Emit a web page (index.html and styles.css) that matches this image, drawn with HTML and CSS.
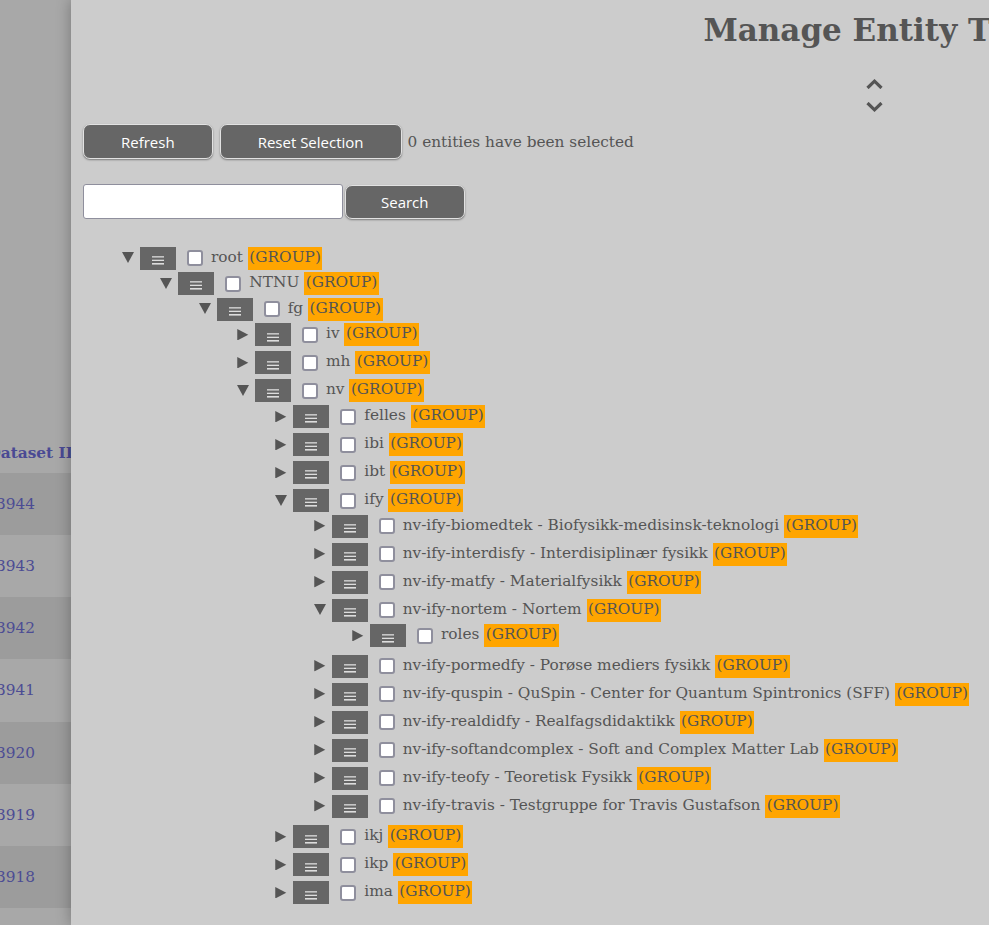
FILE: index.html
```html
<!DOCTYPE html>
<html lang="en">
<head>
<meta charset="utf-8">
<title>Manage Entity Tree</title>
<link rel="stylesheet" href="styles.css">
</head>
<body>
<svg class="defs" width="0" height="0" aria-hidden="true">
  <symbol id="tri-down" viewBox="0 0 12 11"><polygon points="0,0 12,0 6,11"/></symbol>
  <symbol id="tri-right" viewBox="0 0 12 12"><polygon points="0,0 11.5,6 0,12"/></symbol>
  <symbol id="ham" viewBox="0 0 12 9"><rect x="0" y="0.2" width="12" height="1.3"/><rect x="0" y="3.7" width="12" height="1.3"/><rect x="0" y="7" width="12" height="1.6"/></symbol>
</svg>

<div class="bgcol">
  <div class="bg-head"><span class="bg-head-text">Dataset ID</span></div>
  <div class="bg-row dark"><span class="num">3944</span></div>
  <div class="bg-row"><span class="num">3943</span></div>
  <div class="bg-row dark"><span class="num">3942</span></div>
  <div class="bg-row"><span class="num">3941</span></div>
  <div class="bg-row dark"><span class="num">3920</span></div>
  <div class="bg-row"><span class="num">3919</span></div>
  <div class="bg-row dark"><span class="num">3918</span></div>
  <div class="bg-row"><span class="num">3917</span></div>
</div>

<div class="modal">
  <h1 class="title">Manage Entity Tree</h1>
  <div class="sorter">
    <svg class="chev" viewBox="0 0 17 10" width="17" height="10"><polyline points="1.5,9 8.5,2.2 15.5,9"/></svg>
    <svg class="chev" viewBox="0 0 17 10" width="17" height="10"><polyline points="1.5,1 8.5,7.8 15.5,1"/></svg>
  </div>

  <div class="toolbar">
    <button class="btn">Refresh</button>
    <button class="btn">Reset Selection</button>
    <span class="count">0 entities have been selected</span>
  </div>

  <div class="searchrow">
    <input class="search-input" type="text">
    <button class="btn btn-search">Search</button>
  </div>

  <ul class="tree">
    <li class="open">
      <div class="row"><span class="toggle"><svg class="tri"><use href="#tri-down"/></svg></span><span class="menu"><svg class="ham"><use href="#ham"/></svg></span><span class="cb"></span><span class="label">root <span class="grp">(GROUP)</span></span></div>
      <ul class="children">
        <li class="open">
          <div class="row"><span class="toggle"><svg class="tri"><use href="#tri-down"/></svg></span><span class="menu"><svg class="ham"><use href="#ham"/></svg></span><span class="cb"></span><span class="label">NTNU <span class="grp">(GROUP)</span></span></div>
          <ul class="children">
            <li class="open">
              <div class="row"><span class="toggle"><svg class="tri"><use href="#tri-down"/></svg></span><span class="menu"><svg class="ham"><use href="#ham"/></svg></span><span class="cb"></span><span class="label">fg <span class="grp">(GROUP)</span></span></div>
              <ul class="children">
                <li class="closed">
                  <div class="row"><span class="toggle"><svg class="tri-r"><use href="#tri-right"/></svg></span><span class="menu"><svg class="ham"><use href="#ham"/></svg></span><span class="cb"></span><span class="label">iv <span class="grp">(GROUP)</span></span></div>
                </li>
                <li class="closed">
                  <div class="row"><span class="toggle"><svg class="tri-r"><use href="#tri-right"/></svg></span><span class="menu"><svg class="ham"><use href="#ham"/></svg></span><span class="cb"></span><span class="label">mh <span class="grp">(GROUP)</span></span></div>
                </li>
                <li class="open">
                  <div class="row"><span class="toggle"><svg class="tri"><use href="#tri-down"/></svg></span><span class="menu"><svg class="ham"><use href="#ham"/></svg></span><span class="cb"></span><span class="label">nv <span class="grp">(GROUP)</span></span></div>
                  <ul class="children">
                    <li class="closed">
                      <div class="row"><span class="toggle"><svg class="tri-r"><use href="#tri-right"/></svg></span><span class="menu"><svg class="ham"><use href="#ham"/></svg></span><span class="cb"></span><span class="label">felles <span class="grp">(GROUP)</span></span></div>
                    </li>
                    <li class="closed">
                      <div class="row"><span class="toggle"><svg class="tri-r"><use href="#tri-right"/></svg></span><span class="menu"><svg class="ham"><use href="#ham"/></svg></span><span class="cb"></span><span class="label">ibi <span class="grp">(GROUP)</span></span></div>
                    </li>
                    <li class="closed">
                      <div class="row"><span class="toggle"><svg class="tri-r"><use href="#tri-right"/></svg></span><span class="menu"><svg class="ham"><use href="#ham"/></svg></span><span class="cb"></span><span class="label">ibt <span class="grp">(GROUP)</span></span></div>
                    </li>
                    <li class="open">
                      <div class="row"><span class="toggle"><svg class="tri"><use href="#tri-down"/></svg></span><span class="menu"><svg class="ham"><use href="#ham"/></svg></span><span class="cb"></span><span class="label">ify <span class="grp">(GROUP)</span></span></div>
                      <ul class="children">
                        <li class="closed">
                          <div class="row"><span class="toggle"><svg class="tri-r"><use href="#tri-right"/></svg></span><span class="menu"><svg class="ham"><use href="#ham"/></svg></span><span class="cb"></span><span class="label">nv-ify-biomedtek - Biofysikk-medisinsk-teknologi <span class="grp">(GROUP)</span></span></div>
                        </li>
                        <li class="closed">
                          <div class="row"><span class="toggle"><svg class="tri-r"><use href="#tri-right"/></svg></span><span class="menu"><svg class="ham"><use href="#ham"/></svg></span><span class="cb"></span><span class="label">nv-ify-interdisfy - Interdisiplinær fysikk <span class="grp">(GROUP)</span></span></div>
                        </li>
                        <li class="closed">
                          <div class="row"><span class="toggle"><svg class="tri-r"><use href="#tri-right"/></svg></span><span class="menu"><svg class="ham"><use href="#ham"/></svg></span><span class="cb"></span><span class="label">nv-ify-matfy - Materialfysikk <span class="grp">(GROUP)</span></span></div>
                        </li>
                        <li class="open">
                          <div class="row"><span class="toggle"><svg class="tri"><use href="#tri-down"/></svg></span><span class="menu"><svg class="ham"><use href="#ham"/></svg></span><span class="cb"></span><span class="label">nv-ify-nortem - Nortem <span class="grp">(GROUP)</span></span></div>
                          <ul class="children">
                            <li class="closed">
                              <div class="row"><span class="toggle"><svg class="tri-r"><use href="#tri-right"/></svg></span><span class="menu"><svg class="ham"><use href="#ham"/></svg></span><span class="cb"></span><span class="label">roles <span class="grp">(GROUP)</span></span></div>
                            </li>
                          </ul>
                        </li>
                        <li class="closed">
                          <div class="row"><span class="toggle"><svg class="tri-r"><use href="#tri-right"/></svg></span><span class="menu"><svg class="ham"><use href="#ham"/></svg></span><span class="cb"></span><span class="label">nv-ify-pormedfy - Porøse mediers fysikk <span class="grp">(GROUP)</span></span></div>
                        </li>
                        <li class="closed">
                          <div class="row"><span class="toggle"><svg class="tri-r"><use href="#tri-right"/></svg></span><span class="menu"><svg class="ham"><use href="#ham"/></svg></span><span class="cb"></span><span class="label">nv-ify-quspin - QuSpin - Center for Quantum Spintronics (SFF) <span class="grp">(GROUP)</span></span></div>
                        </li>
                        <li class="closed">
                          <div class="row"><span class="toggle"><svg class="tri-r"><use href="#tri-right"/></svg></span><span class="menu"><svg class="ham"><use href="#ham"/></svg></span><span class="cb"></span><span class="label">nv-ify-realdidfy - Realfagsdidaktikk <span class="grp">(GROUP)</span></span></div>
                        </li>
                        <li class="closed">
                          <div class="row"><span class="toggle"><svg class="tri-r"><use href="#tri-right"/></svg></span><span class="menu"><svg class="ham"><use href="#ham"/></svg></span><span class="cb"></span><span class="label">nv-ify-softandcomplex - Soft and Complex Matter Lab <span class="grp">(GROUP)</span></span></div>
                        </li>
                        <li class="closed">
                          <div class="row"><span class="toggle"><svg class="tri-r"><use href="#tri-right"/></svg></span><span class="menu"><svg class="ham"><use href="#ham"/></svg></span><span class="cb"></span><span class="label">nv-ify-teofy - Teoretisk Fysikk <span class="grp">(GROUP)</span></span></div>
                        </li>
                        <li class="closed">
                          <div class="row"><span class="toggle"><svg class="tri-r"><use href="#tri-right"/></svg></span><span class="menu"><svg class="ham"><use href="#ham"/></svg></span><span class="cb"></span><span class="label">nv-ify-travis - Testgruppe for Travis Gustafson <span class="grp">(GROUP)</span></span></div>
                        </li>
                      </ul>
                    </li>
                    <li class="closed">
                      <div class="row"><span class="toggle"><svg class="tri-r"><use href="#tri-right"/></svg></span><span class="menu"><svg class="ham"><use href="#ham"/></svg></span><span class="cb"></span><span class="label">ikj <span class="grp">(GROUP)</span></span></div>
                    </li>
                    <li class="closed">
                      <div class="row"><span class="toggle"><svg class="tri-r"><use href="#tri-right"/></svg></span><span class="menu"><svg class="ham"><use href="#ham"/></svg></span><span class="cb"></span><span class="label">ikp <span class="grp">(GROUP)</span></span></div>
                    </li>
                    <li class="closed">
                      <div class="row"><span class="toggle"><svg class="tri-r"><use href="#tri-right"/></svg></span><span class="menu"><svg class="ham"><use href="#ham"/></svg></span><span class="cb"></span><span class="label">ima <span class="grp">(GROUP)</span></span></div>
                    </li>
                  </ul>
                </li>
              </ul>
            </li>
          </ul>
        </li>
      </ul>
    </li>
  </ul>
</div>
</body>
</html>
```

FILE: styles.css
```css
html, body {
  margin: 0;
  height: 100%;
  overflow: hidden;
}

body {
  display: flex;
  background: #a8a8a8;
  font-family: "DejaVu Serif", serif;
}

.defs {
  position: absolute;
  width: 0;
  height: 0;
  overflow: hidden;
}

/* dimmed page behind the dialog */
.bgcol {
  flex: none;
  width: 71px;
  overflow: hidden;
  background: #a8a8a8;
  white-space: nowrap;
}

.bg-head {
  height: 473px;
  box-sizing: border-box;
  display: flex;
  align-items: flex-end;
  padding-bottom: 10px;
  font-size: 15.33px;
  line-height: 20px;
  font-weight: bold;
  color: #4a4a94;
}

.bg-head-text {
  margin-left: -12.5px;
}

.bg-row {
  height: 62.14px;
  display: flex;
  align-items: center;
  font-size: 15.33px;
  line-height: 20px;
  color: #4c4c94;
  background: #a8a8a8;
}

.bg-row.dark {
  background: #9c9c9c;
}

.num {
  margin-left: -4px;
}

/* dialog */
.modal {
  position: relative;
  flex: none;
  width: 1606px;
  box-sizing: border-box;
  padding: 0 12px;
  background: #cccccc;
  box-shadow: 0 0 14px rgba(0, 0, 0, 0.3);
  color: #555555;
}

.title {
  margin: 12px 0 0;
  text-align: center;
  font-size: 31px;
  line-height: 36px;
  font-weight: bold;
  color: #555555;
}

.sorter {
  display: flex;
  flex-direction: column;
  align-items: center;
  gap: 13px;
  margin-top: 31px;
}

.chev {
  display: block;
  fill: none;
  stroke: #555555;
  stroke-width: 3.2;
}

.toolbar {
  display: flex;
  align-items: center;
  gap: 7px;
  margin-top: 12px;
}

.btn {
  height: 35px;
  box-sizing: border-box;
  margin: 0;
  padding: 0 37px;
  background: #666666;
  color: #ffffff;
  border: 1px solid #e2e2e2;
  border-radius: 7px;
  box-shadow: 0 1px 2px rgba(0, 0, 0, 0.4);
  font-family: "Open Sans", sans-serif;
  font-size: 15px;
  line-height: 20px;
}

.count {
  margin-left: -1px;
  font-size: 15.33px;
  line-height: 20px;
  color: #555555;
}

.searchrow {
  display: flex;
  margin-top: 25px;
}

.search-input {
  width: 260px;
  height: 35px;
  box-sizing: border-box;
  margin: 0;
  padding: 0 6px;
  border: 1px solid #8f8f9d;
  border-radius: 3px;
  background: #ffffff;
}

.btn-search {
  height: 34px;
  margin: 1px 0 0 2px;
  padding: 0 35px;
}

/* tree */
.tree {
  list-style: none;
  margin: 27.5px 0 0;
  padding: 0 0 0 39px;
}

.children {
  list-style: none;
  margin: 0 0 2.5px;
  padding: 0 0 0 38.33px;
}

.row {
  display: flex;
  align-items: flex-start;
  height: 28px;
  white-space: nowrap;
}

.open > .row {
  height: 25.67px;
}

.toggle {
  flex: none;
  width: 18px;
  height: 23px;
  box-sizing: border-box;
  padding-top: 5.5px;
}

.tri {
  display: block;
  width: 12px;
  height: 11px;
  fill: #555555;
}

.tri-r {
  display: block;
  width: 12px;
  height: 11.5px;
  fill: #555555;
}

.menu {
  flex: none;
  width: 36px;
  height: 23px;
  box-sizing: border-box;
  padding-top: 9.3px;
  display: flex;
  justify-content: center;
  background: #666666;
}

.ham {
  display: block;
  width: 12px;
  height: 9px;
  fill: #dddddd;
}

.cb {
  flex: none;
  width: 16px;
  height: 16px;
  box-sizing: border-box;
  margin: 3.5px 8px 0 11px;
  border: 2px solid #8f8f9d;
  border-radius: 3px;
  background: #ffffff;
}

.label {
  font-size: 15.33px;
  line-height: 20px;
  color: #555555;
}

.grp {
  display: inline-block;
  vertical-align: top;
  height: 23px;
  padding: 0 1.5px;
  background: #ffa500;
}
```
